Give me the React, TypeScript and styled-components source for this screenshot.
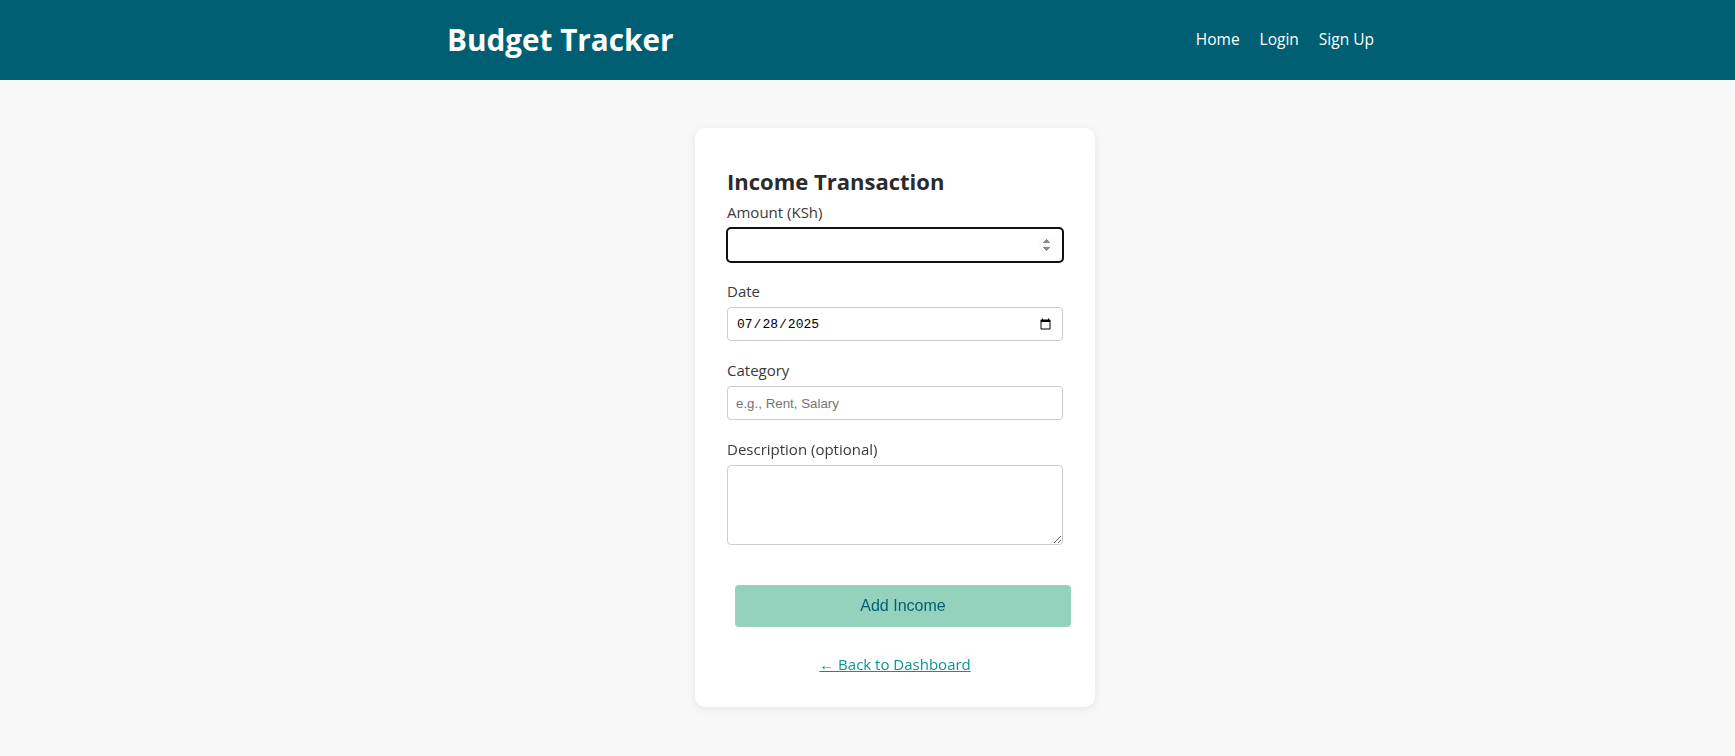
import React from 'react'
import styled, { createGlobalStyle } from 'styled-components'

const GlobalStyle = createGlobalStyle`
  * {
    box-sizing: border-box;
  }
  body {
    margin: 0;
    background: #f8f8f8;
    font-family: "Open Sans", "Noto Sans", sans-serif;
    color: #333;
  }
`

export default function App() {
  return (
    <>
      <GlobalStyle />
      <Header>
        <HeaderInner>
          <Logo>Budget Tracker</Logo>
          <Nav>
            <NavLink href="#">Home</NavLink>
            <NavLink href="#">Login</NavLink>
            <NavLink href="#">Sign Up</NavLink>
          </Nav>
        </HeaderInner>
      </Header>
      <Main>
        <Card>
          <Title>Income Transaction</Title>
          <form onSubmit={(e) => e.preventDefault()}>
            <Field>
              <Label>Amount (KSh)</Label>
              <Input type="number" autoFocus focused />
            </Field>
            <Field>
              <Label>Date</Label>
              <DateInput type="date" defaultValue="2025-07-28" />
            </Field>
            <Field>
              <Label>Category</Label>
              <Input type="text" placeholder="e.g., Rent, Salary" />
            </Field>
            <Field>
              <Label>Description (optional)</Label>
              <TextArea />
            </Field>
            <SubmitButton type="submit">Add Income</SubmitButton>
          </form>
          <BackLink href="#">← Back to Dashboard</BackLink>
        </Card>
      </Main>
    </>
  )
}

const Header = styled.header`
  background: #005f73;
  height: 80px;
`
const HeaderInner = styled.div`
  display: flex;
  align-items: center;
  justify-content: space-between;
  height: 100%;
  width: 927px;
  margin-left: calc(50% - 420.5px);
`
const Logo = styled.h1`
  margin: 0;
  font-size: 29.7px;
  font-weight: 700;
  color: #fff;
  line-height: 1;
`
const Nav = styled.nav`
  display: flex;
  gap: 20px;
  padding-bottom: 2px;
`
const NavLink = styled.a`
  color: #fff;
  text-decoration: none;
  font-size: 15.5px;
`
const Main = styled.main`
  padding: 48px 0 48px;
`
const Card = styled.div`
  width: 400px;
  margin-left: calc(50% - 172.5px);
  background: #fff;
  border-radius: 10px;
  box-shadow: 0 2px 8px rgba(0, 0, 0, 0.08);
  padding: 32px;
`
const Title = styled.h2`
  margin: 6px 0 5px;
  font-size: 22px;
  line-height: 30px;
  font-weight: 700;
  color: #2b2b2b;
`
const Field = styled.div`
  margin-bottom: 18px;
`
const Label = styled.label`
  display: block;
  font-size: 15px;
  line-height: 22px;
  margin-bottom: 5px;
  color: #3a3a3a;
`
const Input = styled.input<{ focused?: boolean }>`
  display: block;
  width: 100%;
  height: 34px;
  padding: 8px;
  border: 1px solid #ccc;
  border-radius: 4px;
  font-family: "Liberation Sans", Arial, sans-serif;
  font-size: 13.33px;
  color: #000;
  background: #fff;
  outline: ${(p) => (p.focused ? '2px solid #101010' : 'none')};
  outline-offset: -1px;
  &::placeholder {
    color: #757575;
  }
  &:focus {
    outline: 2px solid #101010;
  }
`
const DateInput = styled(Input)`
  font-family: "Liberation Mono", "DejaVu Sans Mono", monospace;
  font-size: 13px;
`
const TextArea = styled.textarea`
  display: block;
  width: 100%;
  height: 80px;
  padding: 8px;
  border: 1px solid #ccc;
  border-radius: 4px;
  font-family: "Liberation Sans", Arial, sans-serif;
  font-size: 13.33px;
  resize: vertical;
`
const SubmitButton = styled.button`
  display: block;
  width: 100%;
  height: 42px;
  margin: 40px 0 26px 8px;
  border: none;
  border-radius: 4px;
  background: #94d2bd;
  color: #005f73;
  font-family: "Liberation Sans", Arial, sans-serif;
  font-size: 16px;
  cursor: pointer;
`
const BackLink = styled.a`
  display: block;
  text-align: center;
  color: #0a9396;
  font-size: 15px;
  line-height: 22px;
  text-decoration: underline;
`
